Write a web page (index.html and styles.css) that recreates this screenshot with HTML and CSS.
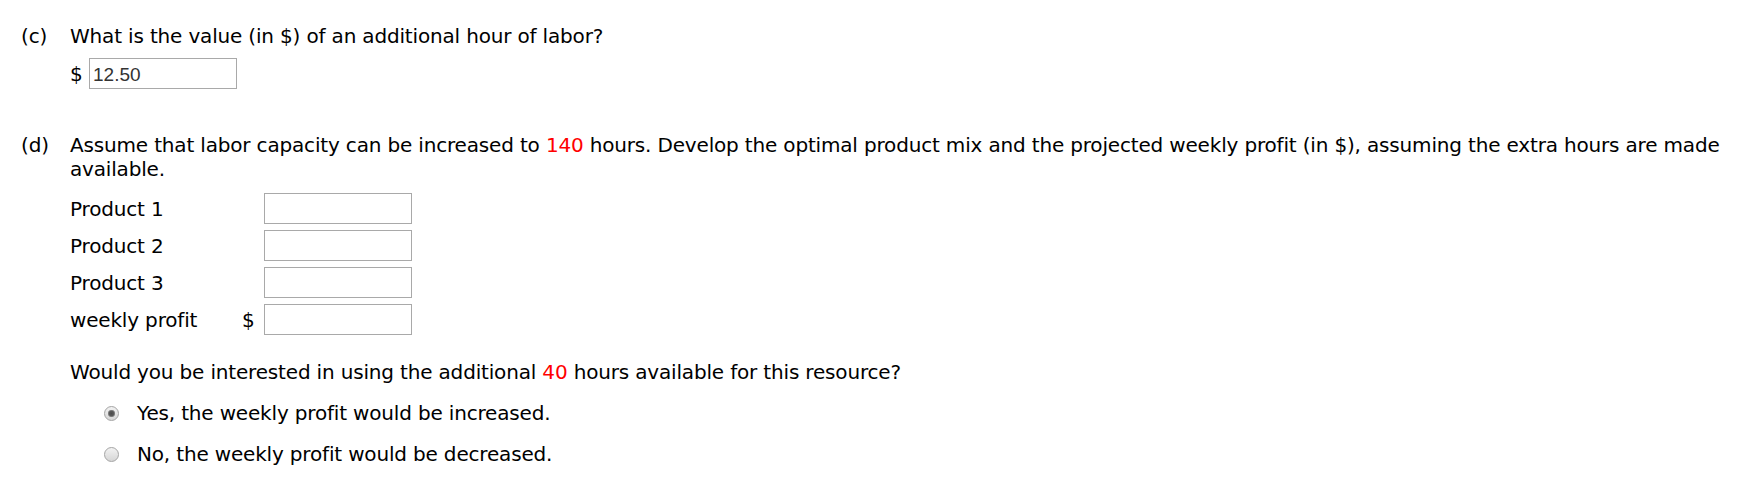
FILE: index.html
```html
<!DOCTYPE html>
<html lang="en">
<head>
<meta charset="utf-8">
<title>Labor capacity question</title>
<link rel="stylesheet" href="styles.css">
</head>
<body>
<div class="part part-c">
  <div class="label">(c)</div>
  <div class="body">
    <div class="q">What is the value (in $) of an additional hour of labor?</div>
    <div class="answer-row">
      <span class="cur">$</span>
      <input class="box" type="text" value="12.50">
    </div>
  </div>
</div>

<div class="part part-d">
  <div class="label">(d)</div>
  <div class="body">
    <div class="q">Assume that labor capacity can be increased to <span class="red">140</span> hours. Develop the optimal product mix and the projected weekly profit (in $), assuming the extra hours are made available.</div>
    <div class="grid">
      <div class="name">Product 1</div><div class="cur2"></div><input class="box" type="text">
      <div class="name">Product 2</div><div class="cur2"></div><input class="box" type="text">
      <div class="name">Product 3</div><div class="cur2"></div><input class="box" type="text">
      <div class="name">weekly profit</div><div class="cur2">$</div><input class="box" type="text">
    </div>
    <div class="q q-would">Would you be interested in using the additional <span class="red">40</span> hours available for this resource?</div>
    <div class="options">
      <label class="opt"><input class="radio" type="radio" name="use" checked><span>Yes, the weekly profit would be increased.</span></label>
      <label class="opt"><input class="radio" type="radio" name="use"><span>No, the weekly profit would be decreased.</span></label>
    </div>
  </div>
</div>
</body>
</html>
```
FILE: styles.css
```css
html, body {
  margin: 0;
  padding: 0;
  background: #ffffff;
}
body {
  font-family: "DejaVu Sans", Verdana, sans-serif;
  font-size: 20px;
  line-height: 24px;
  letter-spacing: -0.17px;
  color: #000000;
}
.part {
  display: grid;
  grid-template-columns: 49px 1fr;
  padding-left: 21px;
}
.part-c {
  padding-top: 24px;
}
.part-d {
  padding-top: 44px;
}
.red {
  color: #ff0000;
}
.answer-row {
  display: flex;
  align-items: center;
  margin-top: 10px;
  height: 31px;
}
.cur {
  width: 19px;
}
.box {
  box-sizing: border-box;
  width: 148px;
  height: 31px;
  margin: 0;
  padding: 2px 3px 0;
  border: 1px solid #a9a9a9;
  border-radius: 0;
  background: #ffffff;
  font-family: "Liberation Sans", Arial, sans-serif;
  font-size: 19px;
  letter-spacing: 0;
  color: #333333;
  outline: none;
}
.grid {
  display: grid;
  grid-template-columns: 172px 22px 148px;
  row-gap: 6px;
  margin-top: 12px;
  align-items: center;
}
.name, .cur2 {
  padding-top: 1px;
}
.q-would {
  margin-top: 25px;
}
.options {
  display: flex;
  flex-direction: column;
  row-gap: 17px;
  margin-top: 17px;
  padding-left: 34px;
}
.opt {
  display: flex;
  align-items: center;
  column-gap: 18px;
  height: 24px;
}
.radio {
  appearance: none;
  -webkit-appearance: none;
  box-sizing: border-box;
  width: 15px;
  height: 15px;
  margin: 0;
  border: 1px solid #a4a4a4;
  border-radius: 50%;
  background: linear-gradient(#f2f2f2, #d6d6d6);
  flex: none;
}
.radio:checked {
  background:
    radial-gradient(circle at 50% 50%, #4a4a4a 0, #5a5a5a 2.5px, #9a9a9a 3.5px, transparent 4px),
    linear-gradient(#f2f2f2, #d6d6d6);
}
```
